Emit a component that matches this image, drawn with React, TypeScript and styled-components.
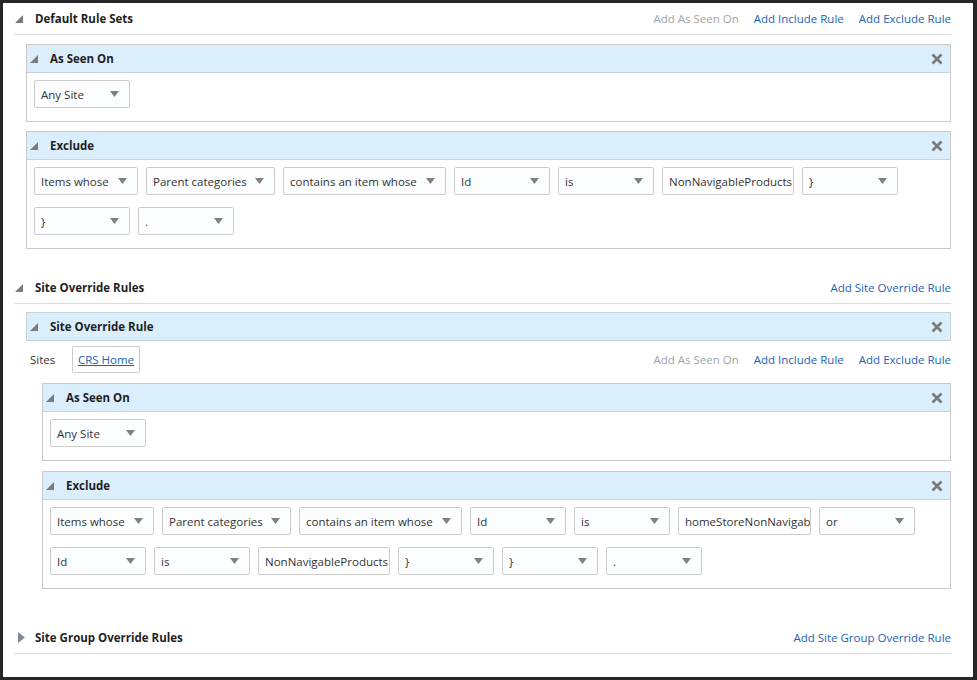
import { FC } from "react";
import styled, { createGlobalStyle } from "styled-components";

const GlobalStyle = createGlobalStyle`
  html, body {
    margin: 0;
    padding: 0;
    background: #262626;
  }
  body {
    font-family: "Open Sans", "Noto Sans", "Liberation Sans", sans-serif;
    font-size: 11.5px;
    color: #333;
  }
`;

const Frame = styled.div`
  box-sizing: border-box;
  width: 977px;
  height: 680px;
  border: solid #262626;
  border-width: 3px 4px 3px 3px;
  background: #fff;
  padding: 0 22px 0 11px;
  overflow: hidden;
`;

const Section = styled.section<{ $top?: number }>`
  margin-top: ${(p) => p.$top ?? 0}px;
`;

const SectionHeader = styled.div`
  display: flex;
  align-items: center;
  height: 31px;
  padding-left: 1px;
  border-bottom: 1px solid #dcdcdc;
`;

const Title = styled.span`
  font-weight: 700;
  color: #1f1f1f;
  margin-left: 12px;
  flex: 1;
`;

const Links = styled.div`
  display: flex;
  gap: 15px;
`;

const Link = styled.a<{ $disabled?: boolean }>`
  color: ${(p) => (p.$disabled ? "#a3a3a3" : "#1d5fb5")};
  text-decoration: none;
  cursor: pointer;
`;

const SectionBody = styled.div<{ $top?: number }>`
  padding: ${(p) => p.$top ?? 9}px 0 0 12px;
  display: flex;
  flex-direction: column;
  gap: 9px;
`;

const Panel = styled.div`
  border: 1px solid #c9c9c9;
`;

const PanelHeader = styled.div<{ $open?: boolean }>`
  display: flex;
  align-items: center;
  height: 27px;
  padding: 0 7px 0 3px;
  background: #dbeefc;
  border: ${(p) => (p.$open ? "1px solid #c6d1da" : "none")};
  border-bottom: 1px solid #c6d1da;
`;

const PanelBody = styled.div`
  padding: 7px 7px 13px;
  display: flex;
  flex-direction: column;
  gap: 12px;
`;

const Row = styled.div`
  display: flex;
  gap: 8px;
`;

const SelectBox = styled.div<{ $w: number }>`
  box-sizing: border-box;
  width: ${(p) => p.$w}px;
  height: 28px;
  border: 1px solid #cbcbcb;
  border-radius: 2px;
  background: #fbfdff;
  display: flex;
  align-items: center;
  padding: 0 10px 0 6px;
  color: #333;
  white-space: nowrap;
`;

const SelectText = styled.span`
  flex: 1;
`;

const TextInput = styled.input<{ $w: number }>`
  box-sizing: border-box;
  width: ${(p) => p.$w}px;
  height: 28px;
  margin: 0;
  border: 1px solid #cbcbcb;
  border-radius: 2px;
  background: #fff;
  padding: 0 0 0 6px;
  font: inherit;
  color: #333;
  outline: none;
`;

const SitesRow = styled.div`
  display: flex;
  align-items: center;
  margin-top: 5px;
  padding-left: 4px;
`;

const SitesLabel = styled.span`
  width: 42px;
`;

const SiteChip = styled.a`
  box-sizing: border-box;
  height: 27px;
  width: 68px;
  border: 1px solid #cbcbcb;
  border-radius: 2px;
  display: flex;
  align-items: center;
  justify-content: center;
  color: #1d5fb5;
  text-decoration: underline;
  margin-right: auto;
`;

const Nested = styled.div`
  margin: 10px 0 0 16px;
  display: flex;
  flex-direction: column;
  gap: 10px;
`;

const Caret: FC<{ closed?: boolean }> = ({ closed }) =>
  closed ? (
    <svg width="8" height="11" viewBox="0 0 8 11" style={{ marginLeft: 2, marginRight: -2 }}>
      <polygon points="1,0 8,5.5 1,11" fill="#808a94" />
    </svg>
  ) : (
    <svg width="8" height="8" viewBox="0 0 8 8">
      <polygon points="8,0 8,8 0,8" fill="#7b7b7b" />
    </svg>
  );

const Arrow = () => (
  <svg width="9" height="6" viewBox="0 0 9 6">
    <polygon points="0,0 9,0 4.5,6" fill="#808080" />
  </svg>
);

const CloseIcon = () => (
  <svg width="12" height="12" viewBox="0 0 12 12">
    <path d="M1.5 1.5 L10.5 10.5 M10.5 1.5 L1.5 10.5" stroke="#7a7a7a" strokeWidth="2.6" />
  </svg>
);

type Field = { label: string; w: number; input?: boolean };

const Select: FC<Field> = ({ label, w, input }) =>
  input ? (
    <TextInput $w={w} value={label} readOnly />
  ) : (
    <SelectBox $w={w}>
      <SelectText>{label}</SelectText>
      <Arrow />
    </SelectBox>
  );

const RulePanel: FC<{ title: string; rows: Field[][] }> = ({ title, rows }) => (
  <Panel>
    <PanelHeader>
      <Caret />
      <Title>{title}</Title>
      <CloseIcon />
    </PanelHeader>
    <PanelBody>
      {rows.map((row, i) => (
        <Row key={i}>
          {row.map((f, j) => (
            <Select key={j} {...f} />
          ))}
        </Row>
      ))}
    </PanelBody>
  </Panel>
);

const anySite: Field[][] = [[{ label: "Any Site", w: 96 }]];

const defaultExclude: Field[][] = [
  [
    { label: "Items whose", w: 104 },
    { label: "Parent categories", w: 129 },
    { label: "contains an item whose", w: 163 },
    { label: "Id", w: 96 },
    { label: "is", w: 96 },
    { label: "NonNavigableProducts", w: 132, input: true },
    { label: "}", w: 96 },
  ],
  [
    { label: "}", w: 96 },
    { label: ".", w: 96 },
  ],
];

const siteExclude: Field[][] = [
  [
    { label: "Items whose", w: 104 },
    { label: "Parent categories", w: 129 },
    { label: "contains an item whose", w: 163 },
    { label: "Id", w: 96 },
    { label: "is", w: 96 },
    { label: "homeStoreNonNavigableProducts", w: 133, input: true },
    { label: "or", w: 96 },
  ],
  [
    { label: "Id", w: 96 },
    { label: "is", w: 96 },
    { label: "NonNavigableProducts", w: 132, input: true },
    { label: "}", w: 96 },
    { label: "}", w: 96 },
    { label: ".", w: 96 },
  ],
];

const RuleLinks = () => (
  <Links>
    <Link $disabled>Add As Seen On</Link>
    <Link>Add Include Rule</Link>
    <Link>Add Exclude Rule</Link>
  </Links>
);

const App: FC = () => (
  <>
    <GlobalStyle />
    <Frame>
      <Section>
        <SectionHeader>
          <Caret />
          <Title>Default Rule Sets</Title>
          <RuleLinks />
        </SectionHeader>
        <SectionBody>
          <RulePanel title="As Seen On" rows={anySite} />
          <RulePanel title="Exclude" rows={defaultExclude} />
        </SectionBody>
      </Section>

      <Section $top={23}>
        <SectionHeader>
          <Caret />
          <Title>Site Override Rules</Title>
          <Link>Add Site Override Rule</Link>
        </SectionHeader>
        <SectionBody $top={8}>
          <div>
            <PanelHeader $open>
              <Caret />
              <Title>Site Override Rule</Title>
              <CloseIcon />
            </PanelHeader>
            <SitesRow>
              <SitesLabel>Sites</SitesLabel>
              <SiteChip>CRS Home</SiteChip>
              <RuleLinks />
            </SitesRow>
            <Nested>
              <RulePanel title="As Seen On" rows={anySite} />
              <RulePanel title="Exclude" rows={siteExclude} />
            </Nested>
          </div>
        </SectionBody>
      </Section>

      <Section $top={33}>
        <SectionHeader>
          <Caret closed />
          <Title>Site Group Override Rules</Title>
          <Link>Add Site Group Override Rule</Link>
        </SectionHeader>
      </Section>
    </Frame>
  </>
);

export default App;
